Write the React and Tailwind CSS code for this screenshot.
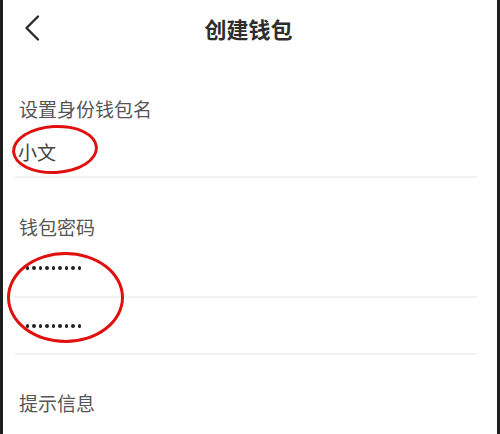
import React from 'react'

const FONT = { fontFamily: '"Noto Sans CJK SC", "Noto Sans", sans-serif' }

function Dots({ count = 9 }) {
  return (
    <div className="flex items-center gap-[3.3px] ml-[23px] h-[6px]">
      {Array.from({ length: count }).map((_, i) => (
        <span key={i} className="block w-[3.2px] h-[3.2px] rounded-full bg-[#222]" />
      ))}
    </div>
  )
}

function Divider() {
  return <div className="h-[2px] bg-[#f1f1f1] ml-[12px] w-[462px]" />
}

export default function App() {
  return (
    <div
      style={FONT}
      className="relative w-[500px] h-[434px] overflow-hidden bg-white border-l-[3px] border-r-[3px] border-[#1e1e1e]"
    >
      {/* Header */}
      <div className="relative h-[54px] flex items-center justify-center">
        <svg
          className="absolute left-[19px] top-[13px]"
          width="20"
          height="30"
          viewBox="0 0 20 30"
          fill="none"
        >
          <path d="M16 3.5 L4.5 15 L16 26.5" stroke="#2b2b2b" strokeWidth="2.4" strokeLinecap="round" strokeLinejoin="round" />
        </svg>
        <h1 className="text-[22px] leading-[22px] font-bold text-[#2e2e2e] mt-[2px] ml-[-3px]">创建钱包</h1>
      </div>

      {/* Wallet name */}
      <div className="pl-[16px] pt-[45px] text-[19px] leading-[20px] text-[#555]">设置身份钱包名</div>
      <div className="pl-[15px] mt-[23px] text-[19px] leading-[20px] text-[#444]">小文</div>
      <div className="mt-[14px]">
        <Divider />
      </div>

      {/* Password */}
      <div className="pl-[16px] mt-[39px] text-[19px] leading-[20px] text-[#555]">钱包密码</div>
      <div className="mt-[28px]">
        <Dots />
      </div>
      <div className="mt-[25px]">
        <Divider />
      </div>
      <div className="mt-[25px]">
        <Dots />
      </div>
      <div className="mt-[24px]">
        <Divider />
      </div>

      {/* Hint */}
      <div className="pl-[16px] mt-[38px] text-[19px] leading-[20px] text-[#555]">提示信息</div>

      {/* Red annotation circles */}
      <div className="absolute left-[9px] top-[125px] w-[86px] h-[49px] rounded-[50%] border-[3.5px] border-[#e0100f] -rotate-3" />
      <div className="absolute left-[4px] top-[252px] w-[117px] h-[91px] rounded-[50%] border-[3.5px] border-[#e0100f]" />
    </div>
  )
}
